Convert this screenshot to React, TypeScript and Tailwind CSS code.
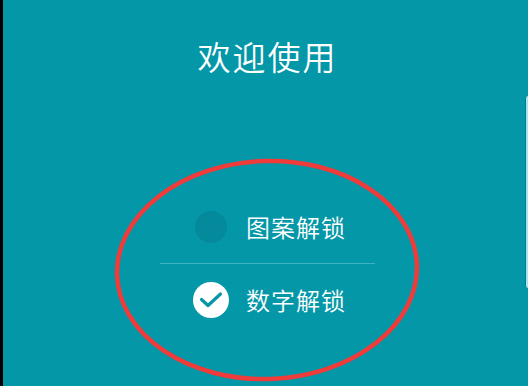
import React from 'react';

const options = [
    { id: 'pattern', label: '图案解锁', checked: false },
    { id: 'number', label: '数字解锁', checked: true },
];

const CheckDot = ({ checked }: { checked: boolean }) =>
    checked ? (
        <svg width="36" height="36" viewBox="0 0 36 36" className="shrink-0 -ml-[2px] -mr-[2px]">
            <circle cx="18" cy="18" r="18" fill="#ffffff" />
            <path d="M8.5 17.5 L15 23.5 L27.5 12" fill="none" stroke="#0497a8" strokeWidth="3.2" strokeLinecap="round" strokeLinejoin="round" />
        </svg>
    ) : (
        <div className="w-[32px] h-[32px] rounded-full bg-[#048a9a] shrink-0" />
    );

const App = () => {
    return (
        <div
            className="relative w-[528px] h-[386px] overflow-hidden bg-[#0497a8] border-l-[3px] border-black text-white"
            style={{ fontFamily: '"Noto Sans CJK SC", "Noto Sans", sans-serif' }}
        >
            <h1 className="pt-[36px] pl-[4px] text-center text-[33px] leading-[40px] font-[350] tracking-[2px]">欢迎使用</h1>

            <div className="w-[215px] mt-[115px] ml-[157px]">
                {options.map((opt, i) => (
                    <div key={opt.id}>
                        {i > 0 && <div className="h-px bg-[#3cb4c2]" />}
                        <div className="h-[72px] flex items-center pl-[35px] gap-[19px]">
                            <CheckDot checked={opt.checked} />
                            <span className="text-[24px] leading-[30px] font-[350] tracking-[1px]">{opt.label}</span>
                        </div>
                    </div>
                ))}
            </div>

            {/* screen edge on the right */}
            <div className="absolute right-0 top-[96px] w-[3px] h-[192px] rounded-l-full bg-[#037c8a]">
                <div className="ml-[1px] w-[2px] h-full rounded-l-full bg-[#a8e4ea]" />
            </div>

            {/* red annotation ring */}
            <svg className="absolute left-0 top-0 pointer-events-none" width="528" height="386">
                <ellipse cx="264" cy="270" rx="150" ry="109" fill="none" stroke="#f03b3b" strokeWidth="4.5" transform="rotate(-2 264 270)" />
            </svg>
        </div>
    );
};

export default App;
